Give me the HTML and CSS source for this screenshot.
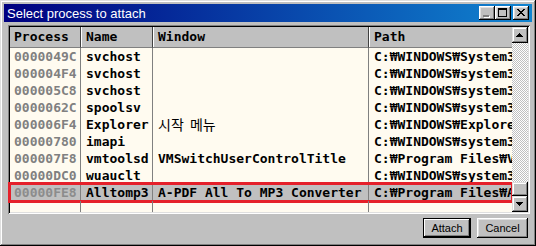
FILE: index.html
```html
<!DOCTYPE html>
<html>
<head>
    <title>Select process to attach</title>
    <link rel="stylesheet" href="styles.css">
</head>
<body>
    <div class="window">
        <div class="titlebar">
            <span class="title">Select process to attach</span>
            <div class="title-buttons">
                <span class="tbtn">
                    <svg width="16" height="14" shape-rendering="crispEdges">
                        <rect x="5" y="10" width="6" height="2" fill="#fff"/>
                        <rect x="4" y="9" width="6" height="2" fill="#808080"/>
                    </svg>
                </span>
                <span class="tbtn">
                    <svg width="16" height="14" shape-rendering="crispEdges">
                        <path d="M3 2h9v9h-9z M4 4v6h7v-6z" fill="#000" fill-rule="evenodd"/>
                    </svg>
                </span>
                <span class="tbtn close">
                    <svg width="16" height="14" shape-rendering="crispEdges">
                        <path d="M4 3h2v1h-2z M10 3h2v1h-2z M5 4h2v1h-2z M9 4h2v1h-2z M6 5h4v1h-4z M7 6h2v1h-2z M6 7h4v1h-4z M5 8h2v1h-2z M9 8h2v1h-2z M4 9h2v1h-2z M10 9h2v1h-2z" fill="#000"/>
                    </svg>
                </span>
            </div>
        </div>

        <div class="list">
            <div class="table">
                <div class="row head">
                    <div class="cell">Process</div>
                    <div class="cell">Name</div>
                    <div class="cell">Window</div>
                    <div class="cell">Path</div>
                </div>
                <div class="rows">
                    <div class="row">
                        <div class="cell pid">0000049C</div>
                        <div class="cell">svchost</div>
                        <div class="cell"></div>
                        <div class="cell">C:₩WINDOWS₩System32₩svchost.exe</div>
                    </div>
                    <div class="row">
                        <div class="cell pid">000004F4</div>
                        <div class="cell">svchost</div>
                        <div class="cell"></div>
                        <div class="cell">C:₩WINDOWS₩system32₩svchost.exe</div>
                    </div>
                    <div class="row">
                        <div class="cell pid">000005C8</div>
                        <div class="cell">svchost</div>
                        <div class="cell"></div>
                        <div class="cell">C:₩WINDOWS₩system32₩svchost.exe</div>
                    </div>
                    <div class="row">
                        <div class="cell pid">0000062C</div>
                        <div class="cell">spoolsv</div>
                        <div class="cell"></div>
                        <div class="cell">C:₩WINDOWS₩system32₩spoolsv.exe</div>
                    </div>
                    <div class="row">
                        <div class="cell pid">000006F4</div>
                        <div class="cell">Explorer</div>
                        <div class="cell ko">시작 메뉴</div>
                        <div class="cell">C:₩WINDOWS₩Explorer.EXE</div>
                    </div>
                    <div class="row">
                        <div class="cell pid">00000780</div>
                        <div class="cell">imapi</div>
                        <div class="cell"></div>
                        <div class="cell">C:₩WINDOWS₩system32₩imapi.exe</div>
                    </div>
                    <div class="row">
                        <div class="cell pid">000007F8</div>
                        <div class="cell">vmtoolsd</div>
                        <div class="cell">VMSwitchUserControlTitle</div>
                        <div class="cell">C:₩Program Files₩VMware₩vmtoolsd.exe</div>
                    </div>
                    <div class="row">
                        <div class="cell pid">00000DC0</div>
                        <div class="cell">wuauclt</div>
                        <div class="cell"></div>
                        <div class="cell">C:₩WINDOWS₩system32₩wuauclt.exe</div>
                    </div>
                    <div class="row selected">
                        <div class="cell pid">00000FE8</div>
                        <div class="cell">Alltomp3</div>
                        <div class="cell">A-PDF All To MP3 Converter</div>
                        <div class="cell">C:₩Program Files₩A-PDF₩Alltomp3.exe</div>
                    </div>
                    <div class="row filler">
                        <div class="cell"></div>
                        <div class="cell"></div>
                        <div class="cell"></div>
                        <div class="cell"></div>
                    </div>
                </div>
            </div>
            <div class="scrollbar">
                <span class="sbtn">
                    <svg width="16" height="16" shape-rendering="crispEdges">
                        <path d="M7 6h1v1h-1z M6 7h3v1h-3z M5 8h5v1h-5z M4 9h7v1h-7z" fill="#000"/>
                    </svg>
                </span>
                <div class="track"></div>
                <span class="thumb"></span>
                <span class="sbtn">
                    <svg width="16" height="16" shape-rendering="crispEdges">
                        <path d="M4 6h7v1h-7z M5 7h5v1h-5z M6 8h3v1h-3z M7 9h1v1h-1z" fill="#000"/>
                    </svg>
                </span>
            </div>
        </div>

        <div class="footer">
            <button class="btn default">Attach</button>
            <button class="btn">Cancel</button>
        </div>
    </div>
</body>
</html>
```

FILE: styles.css
```css
body {
    margin: 0;
    background-color: #c0c0c0;
    font-family: "Liberation Sans", Arial, sans-serif;
}
.window {
    width: 536px;
    height: 246px;
    box-sizing: border-box;
    padding: 4px;
    display: flex;
    flex-direction: column;
    background-color: #c0c0c0;
    box-shadow: inset -1px -1px #000, inset 1px 1px #dfdfdf,
                inset -2px -2px #808080, inset 2px 2px #fff;
}
.titlebar {
    height: 18px;
    display: flex;
    align-items: center;
    justify-content: space-between;
    padding: 0 3px;
    background: linear-gradient(to right, #000080, #1084d0);
}
.title {
    color: white;
    font-size: 13px;
    white-space: nowrap;
}
.title-buttons {
    display: flex;
}
.tbtn {
    width: 16px;
    height: 14px;
    display: block;
    background-color: #c0c0c0;
    box-shadow: inset -1px -1px #000, inset 1px 1px #fff,
                inset -2px -2px #808080, inset 2px 2px #dfdfdf;
}
.tbtn svg, .sbtn svg {
    display: block;
}
.tbtn.close {
    margin-left: 2px;
}
.list {
    height: 189px;
    margin: 3px 2px 0 4px;
    padding: 2px;
    box-sizing: border-box;
    display: flex;
    box-shadow: inset 1px 1px #808080, inset -1px -1px #fff,
                inset 2px 2px #000, inset -2px -2px #dfdfdf;
}
.table {
    flex: 1;
    display: flex;
    flex-direction: column;
    background-color: #fffbf0;
    font-family: "DejaVu Sans Mono", monospace;
    font-weight: bold;
    font-size: 13px;
}
.row {
    display: grid;
    grid-template-columns: 71px 72px 216px 143px;
    height: 17px;
    line-height: 17px;
}
.cell {
    padding: 0 4px 0 5px;
    border-right: 1px solid #808080;
    white-space: nowrap;
    overflow: hidden;
}
.cell:first-child {
    padding-left: 4px;
}
.cell:last-child {
    border-right: none;
}
.row.head {
    height: 21px;
    line-height: 20px;
    background-color: #c0c0c0;
}
.row.head .cell {
    border-bottom: 1px solid #808080;
    border-right-color: #404040;
    box-shadow: inset 1px 0 #fff;
}
.row.head .cell:first-child {
    box-shadow: none;
}
.rows {
    flex: 1;
    display: flex;
    flex-direction: column;
}
.pid {
    color: #808080;
}
.ko {
    font-family: "Noto Sans CJK KR", sans-serif;
    font-weight: normal;
    font-size: 14px;
    word-spacing: 3px;
}
.row.selected {
    background-color: #c0c0c0;
    outline: 3px solid #e5202a;
    outline-offset: -1px;
}
.row.selected .pid {
    color: #8c8c8c;
}
.row.filler {
    flex: 1;
}
.scrollbar {
    width: 16px;
    display: flex;
    flex-direction: column;
}
.sbtn {
    width: 16px;
    height: 16px;
    display: block;
    background-color: #c0c0c0;
    box-shadow: inset -1px -1px #000, inset 1px 1px #dfdfdf,
                inset -2px -2px #808080, inset 2px 2px #fff;
}
.track {
    flex: 1;
    background-image: repeating-conic-gradient(#c0c0c0 0 25%, #fff 0 50%);
    background-size: 2px 2px;
}
.thumb {
    height: 14px;
    display: block;
    background-color: #c0c0c0;
    box-shadow: inset -1px -1px #000, inset 1px 1px #dfdfdf,
                inset -2px -2px #808080, inset 2px 2px #fff;
}
.footer {
    display: flex;
    justify-content: flex-end;
    gap: 6px;
    margin: 4px 4px 0 0;
}
.btn {
    height: 20px;
    width: 51px;
    padding: 0;
    border: none;
    background-color: #c0c0c0;
    font-family: "Liberation Sans", Arial, sans-serif;
    font-size: 11px;
    color: black;
    box-shadow: inset -1px -1px #000, inset 1px 1px #fff,
                inset -2px -2px #808080, inset 2px 2px #dfdfdf;
}
.btn.default {
    width: 48px;
    box-shadow: inset 0 0 0 1px #000, inset -2px -2px #000, inset 2px 2px #fff,
                inset -3px -3px #808080;
}
```
